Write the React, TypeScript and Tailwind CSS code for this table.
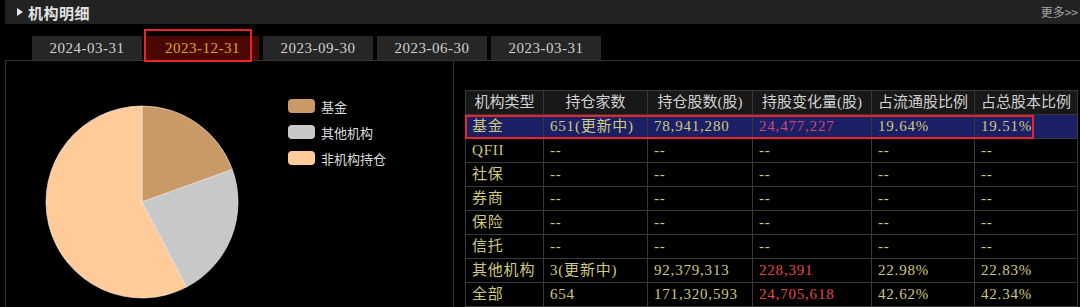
import React from 'react';

const tabs = ['2024-03-31', '2023-12-31', '2023-09-30', '2023-06-30', '2023-03-31'];

const slices = [
  { name: '基金', value: 19.51, color: '#c99a66' },
  { name: '其他机构', value: 22.83, color: '#c8c8c8' },
  { name: '非机构持仓', value: 57.66, color: '#ffcc99' },
];

const head = ['机构类型', '持仓家数', '持仓股数(股)', '持股变化量(股)', '占流通股比例', '占总股本比例'];
const colW = ['w-[78px]', 'w-[104px]', 'w-[105px]', 'w-[119px]', 'w-[103px]', 'w-[103px]'];

const rows = [
  ['基金', '651(更新中)', '78,941,280', '24,477,227', '19.64%', '19.51%'],
  ['QFII', '--', '--', '--', '--', '--'],
  ['社保', '--', '--', '--', '--', '--'],
  ['券商', '--', '--', '--', '--', '--'],
  ['保险', '--', '--', '--', '--', '--'],
  ['信托', '--', '--', '--', '--', '--'],
  ['其他机构', '3(更新中)', '92,379,313', '228,391', '22.98%', '22.83%'],
  ['全部', '654', '171,320,593', '24,705,618', '42.62%', '42.34%'],
];

const serif = "font-['Liberation_Serif','Noto_Sans_CJK_SC',serif]";

function Pie() {
  const cx = 97;
  const cy = 97;
  const r = 96;
  let start = 0;
  return (
    <svg width="194" height="194" viewBox="0 0 194 194">
      {slices.map((s) => {
        const a0 = (start / 100) * Math.PI * 2;
        start += s.value;
        const a1 = (start / 100) * Math.PI * 2;
        const x0 = cx + r * Math.sin(a0);
        const y0 = cy - r * Math.cos(a0);
        const x1 = cx + r * Math.sin(a1);
        const y1 = cy - r * Math.cos(a1);
        const large = a1 - a0 > Math.PI ? 1 : 0;
        return (
          <path
            key={s.name}
            d={`M${cx},${cy} L${x0},${y0} A${r},${r} 0 ${large} 1 ${x1},${y1} Z`}
            fill={s.color}
            stroke="#f5f5f5"
            strokeWidth="0.6"
            strokeLinejoin="round"
          />
        );
      })}
    </svg>
  );
}

export default function App() {
  return (
    <div className="relative w-[1080px] h-[307px] bg-black overflow-hidden font-['Noto_Sans_CJK_SC',sans-serif]">
      {/* header */}
      <div className="ml-[5px] h-[24px] bg-[#222222] flex items-center justify-between">
        <div className="flex items-center pl-[12px]">
          <span className="w-0 h-0 border-y-[4px] border-y-transparent border-l-[6px] border-l-[#e5e5e5]"></span>
          <span className="ml-[5px] text-[15px] font-bold text-[#e2e2e2] leading-none tracking-[0.5px]">机构明细</span>
        </div>
        <span className="pr-[2px] text-[12px] text-[#a8a8a8] leading-none">更多&gt;&gt;</span>
      </div>

      {/* tabs */}
      <div className="mt-[12px] ml-[32px] flex gap-[4px] h-[24px]">
        {tabs.map((t, i) => (
          <div
            key={t}
            className={`${i === 1 ? 'w-[113px] bg-[#4a0800] text-[#e0a028]' : 'w-[110px] bg-[#262626] text-[#cfcfcf]'} ${serif} flex items-center justify-center text-[15px] tracking-[0.5px]`}
          >
            {t}
          </div>
        ))}
      </div>

      {/* body */}
      <div className="ml-[5px] border-l border-t border-[#333333] flex h-[247px]">
        <div className="w-[448px] border-r border-[#333333] flex items-start">
          <div className="ml-[39px] mt-[44px]">
            <Pie />
          </div>
          <div className="ml-[49px] mt-[38px] flex flex-col gap-[12px]">
            {slices.map((s) => (
              <div key={s.name} className="flex items-center h-[14px]">
                <span className="w-[27px] h-[14px] rounded-[4px]" style={{ backgroundColor: s.color }}></span>
                <span className="ml-[6px] text-[13px] text-[#dddddd] leading-none">{s.name}</span>
              </div>
            ))}
          </div>
        </div>

        <div className="flex-1 pl-[11px] pt-[29px]">
          <table className={`border-collapse ${serif} text-[15px]`}>
            <thead>
              <tr className="h-[24px] bg-[#181818]">
                {head.map((h, i) => (
                  <th key={h} className={`${colW[i]} border border-[#383838] font-normal text-[#d2d2d2] text-center p-0 leading-none`}>
                    {h}
                  </th>
                ))}
              </tr>
            </thead>
            <tbody>
              {rows.map((r, ri) => (
                <tr key={r[0]} className={`h-[24px] ${ri === 0 ? 'bg-[#1b1f66]' : ''}`}>
                  {r.map((c, ci) => (
                    <td
                      key={ci}
                      className={`border border-[#383838] px-[6px] py-0 leading-none text-left tracking-[0.8px] ${
                        ci === 3 && c !== '--' ? (ri === 0 ? 'text-[#d4487a]' : 'text-[#e04848]') : 'text-[#cfc97c]'
                      }`}
                    >
                      {c}
                    </td>
                  ))}
                </tr>
              ))}
            </tbody>
          </table>
        </div>
      </div>

      {/* annotation boxes */}
      <div className="absolute left-[144px] top-[29px] w-[108px] h-[33px] border-2 border-[#e8262a]"></div>
      <div className="absolute left-[465px] top-[115px] w-[569px] h-[24px] border-2 border-[#e8262a]"></div>
    </div>
  );
}
